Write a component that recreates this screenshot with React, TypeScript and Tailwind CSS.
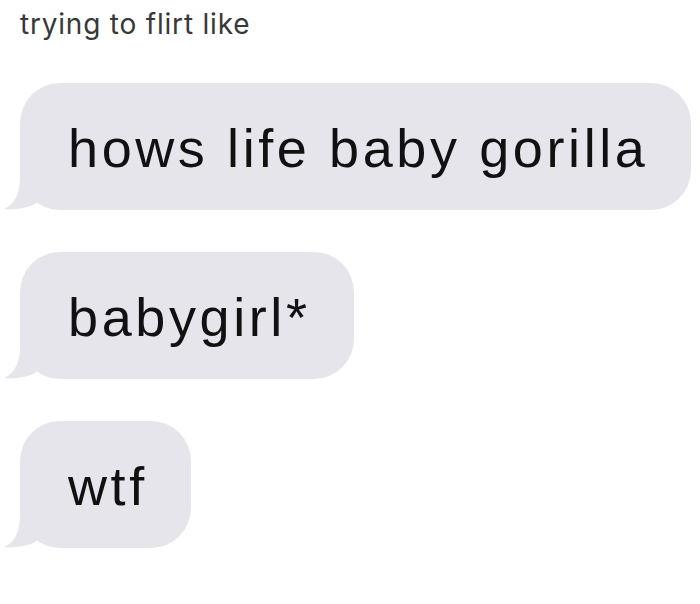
import React from 'react';

function Tail() {
  return (
    <svg
      className="absolute left-[-16px] bottom-0"
      width="40"
      height="44"
      viewBox="0 0 40 44"
    >
      <path d="M16 0 L36 0 L36 34 C30 40 22 42 12 43 C8 43.5 4 43.5 0 43 C12 38 16 26 16 10 Z" fill="#e6e5ec" />
    </svg>
  );
}

function Bubble({ text }: { text: string }) {
  return (
    <div className="relative self-start">
      <Tail />
      <div className="relative rounded-[40px] bg-[#e6e5ec] h-[127px] pl-[48px] pr-[43px] flex items-center">
        <span className="text-[54px] leading-none tracking-[3.6px] text-[#111] font-['Liberation_Sans',Arial,sans-serif] pt-[2px]">
          {text}
        </span>
      </div>
    </div>
  );
}

export default function App() {
  return (
    <div className="w-[700px] h-[604px] bg-white overflow-hidden">
      <div className="pl-[20px] pt-[6px] text-[28px] leading-[36px] tracking-[0.8px] text-[#383838] font-['Inter',sans-serif]">
        trying to flirt like
      </div>
      <div className="flex flex-col gap-[42px] pl-[20px] pt-[41px]">
        <Bubble text="hows life baby gorilla" />
        <Bubble text="babygirl*" />
        <Bubble text="wtf" />
      </div>
    </div>
  );
}
